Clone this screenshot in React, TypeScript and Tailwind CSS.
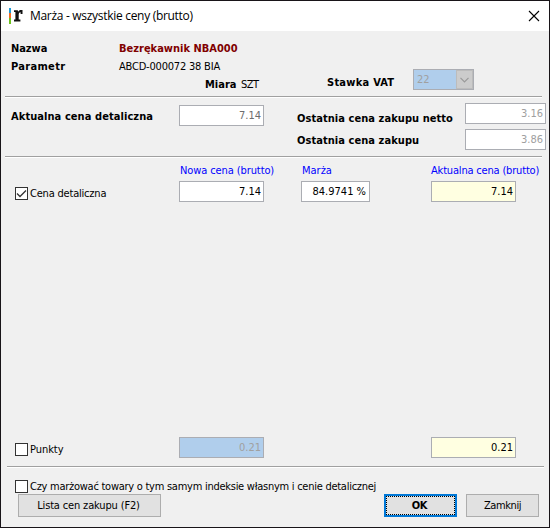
import type { ReactNode } from 'react';

function Field({ value, className = '' }: { value: string; className?: string }) {
  return (
    <div className={`h-[21px] shrink-0 border border-[#abadb3] text-right leading-[19px] ${className}`}>
      {value}
    </div>
  );
}

function Rule({ className = '' }: { className?: string }) {
  return <div className={`h-[2px] shrink-0 border-t border-[#a0a0a0] bg-white ${className}`} />;
}

function Check({ checked = false, children }: { checked?: boolean; children: ReactNode }) {
  return (
    <div className="flex h-[13px] gap-[2px] leading-[13px]">
      <span className="h-[13px] w-[13px] shrink-0 border border-[#333] bg-white">
        {checked && (
          <svg className="block h-[11px] w-[11px]" viewBox="0 0 11 11" fill="none" stroke="#333" strokeWidth="1.3">
            <path d="M1 5.500 4 8.500 10 2.500" />
          </svg>
        )}
      </span>
      {children}
    </div>
  );
}

function Logo() {
  return (
    <div className="flex h-4 items-start">
      <div className="flex h-4 w-[2px] flex-col">
        <span className="h-[5px] bg-[#1f9ad6]" />
        <span className="h-[5px] bg-[#f26a21]" />
        <span className="h-[6px] bg-[#6cc01e]" />
      </div>
      <svg className="ml-[3px] mt-[2px] h-[12px] w-[9px]" viewBox="0 0 9 12" fill="#111">
        <path d="M0 .3H3.800L4.100 1.800C4.700 .6 5.700 0 6.900 0H8.500V4H6.600V2.200C5.500 2.200 4.800 3 4.700 4.400V9.600H6.400V11.400H0V9.600H1.400V2.100H0Z" />
      </svg>
    </div>
  );
}

export default function App() {
  return (
    <div className="flex h-[528px] w-[550px] flex-col overflow-hidden whitespace-nowrap border border-[#181418] bg-[#f0f0f0] font-['DejaVu_Sans_Condensed','DejaVu_Sans',sans-serif] text-[11px] text-black">
      <header className="flex h-[30px] shrink-0 items-center bg-white pl-2">
        <Logo />
        <span className="ml-[7px] font-['Open_Sans',sans-serif] text-[12px] leading-[16px] tracking-[-0.3px]">
          Marża - wszystkie ceny (brutto)
        </span>
        <svg className="ml-auto mr-[9px] h-[12px] w-[12px]" viewBox="0 0 12 12" stroke="#000" strokeWidth="1.1">
          <path d="M1 1 11 11M11 1 1 11" />
        </svg>
      </header>

      <section className="flex h-[65px] shrink-0 pl-[10px] pt-[9px] leading-[18px]">
        <div className="w-[108px] font-bold">
          <div className="tracking-[-0.05px]">Nazwa</div>
          <div className="tracking-[0.32px]">Parametr</div>
        </div>
        <div className="w-[208px]">
          <div className="font-bold text-[#800000]">Bezrękawnik NBA000</div>
          <div className="tracking-[-0.2px]">ABCD-000072 38 BIA</div>
          <div className="flex pl-[86px]">
            <b className="w-[36px]">Miara</b>
            <span className="tracking-[-0.5px]">SZT</span>
          </div>
        </div>
        <b className="mt-[34px] w-[86px] tracking-[0.25px]">Stawka VAT</b>
        <div className="mt-[29px] flex h-[21px] w-[61px] border border-[#abadb3] bg-[#b0ceec] leading-[19px] text-[#a0a0a0]">
          <span className="w-[42px] pl-[3px]">22</span>
          <span className="flex h-[19px] w-[17px] items-center justify-center border border-[#bcbcbc] bg-[#cccccc]">
            <svg className="h-[6px] w-[9px]" viewBox="0 0 9 6" fill="none" stroke="#9a9a9a" strokeWidth="1.2">
              <path d="M.5 .8 4.500 4.800 8.500 .8" />
            </svg>
          </span>
        </div>
      </section>

      <Rule className="ml-[4px] mr-[7px]" />

      <section className="flex h-[58px] shrink-0 pl-[10px]">
        <b className="mt-[10px] w-[168px] leading-[18px] tracking-[0.07px]">Aktualna cena detaliczna</b>
        <Field value="7.14" className="mt-[7px] w-[85px] bg-white pr-[2px] text-[#6d6d6d]" />
        <div className="ml-[33px] w-[168px] pt-[10px] font-bold leading-[22px]">
          <div className="tracking-[0.06px]">Ostatnia cena zakupu netto</div>
          <div className="tracking-[0.06px]">Ostatnia cena zakupu</div>
        </div>
        <div className="flex flex-col gap-[5px] pt-[5px]">
          <Field value="3.16" className="w-[81px] bg-white pr-[2px] text-[#a0a0a0]" />
          <Field value="3.86" className="w-[81px] bg-white pr-[2px] text-[#a0a0a0]" />
        </div>
      </section>

      <Rule className="ml-[4px] mr-[7px]" />

      <section className="h-[308px] shrink-0">
        <div className="flex h-[23px] pl-[179px] pt-[4px] leading-[18px] text-[#0000ff]">
          <span className="w-[122px] tracking-[-0.1px]">Nowa cena (brutto)</span>
          <span className="w-[129px]">Marża</span>
          <span className="tracking-[-0.18px]">Aktualna cena (brutto)</span>
        </div>
        <div className="flex h-[21px]">
          <div className="w-[178px] pl-[14px] pt-[6px] tracking-[-0.2px]">
            <Check checked>Cena detaliczna</Check>
          </div>
          <Field value="7.14" className="w-[85px] bg-white pr-[2px]" />
          <Field value="84.9741 %" className="ml-[37px] w-[69px] bg-white pr-[3px]" />
          <Field value="7.14" className="ml-[61px] w-[85px] bg-[#ffffe1] pr-[2px]" />
        </div>
        <div className="mt-[235px] flex h-[21px]">
          <div className="w-[178px] pl-[14px] pt-[6px] tracking-[-0.05px]">
            <Check>Punkty</Check>
          </div>
          <Field value="0.21" className="w-[85px] bg-[#b0ceec] pr-[2px] text-[#a0a0a0]" />
          <Field value="0.21" className="ml-[167px] w-[85px] bg-[#ffffe1] pr-[2px]" />
        </div>
      </section>

      <Rule className="ml-[6px] mr-[5px]" />

      <footer>
        <div className="pl-[14px] pt-[12px] tracking-[-0.26px]">
          <Check>Czy marżować towary o tym samym indeksie własnym i cenie detalicznej</Check>
        </div>
        <div className="mt-px flex h-[23px] pl-[17px] leading-[21px]">
          <button className="w-[143px] border border-[#adadad] bg-[#e1e1e1] pr-[2px] tracking-[-0.15px]">
            Lista cen zakupu (F2)
          </button>
          <button className="ml-[223px] w-[73px] border-2 border-[#0078d7] bg-[#e1e1e1] font-bold leading-[17px] tracking-[-0.3px]">
            <span className="block h-[19px] border border-dotted border-black pr-[2px]">OK</span>
          </button>
          <button className="ml-[9px] w-[73px] border border-[#adadad] bg-[#e1e1e1] tracking-[-0.4px]">
            Zamknij
          </button>
        </div>
      </footer>
    </div>
  );
}
